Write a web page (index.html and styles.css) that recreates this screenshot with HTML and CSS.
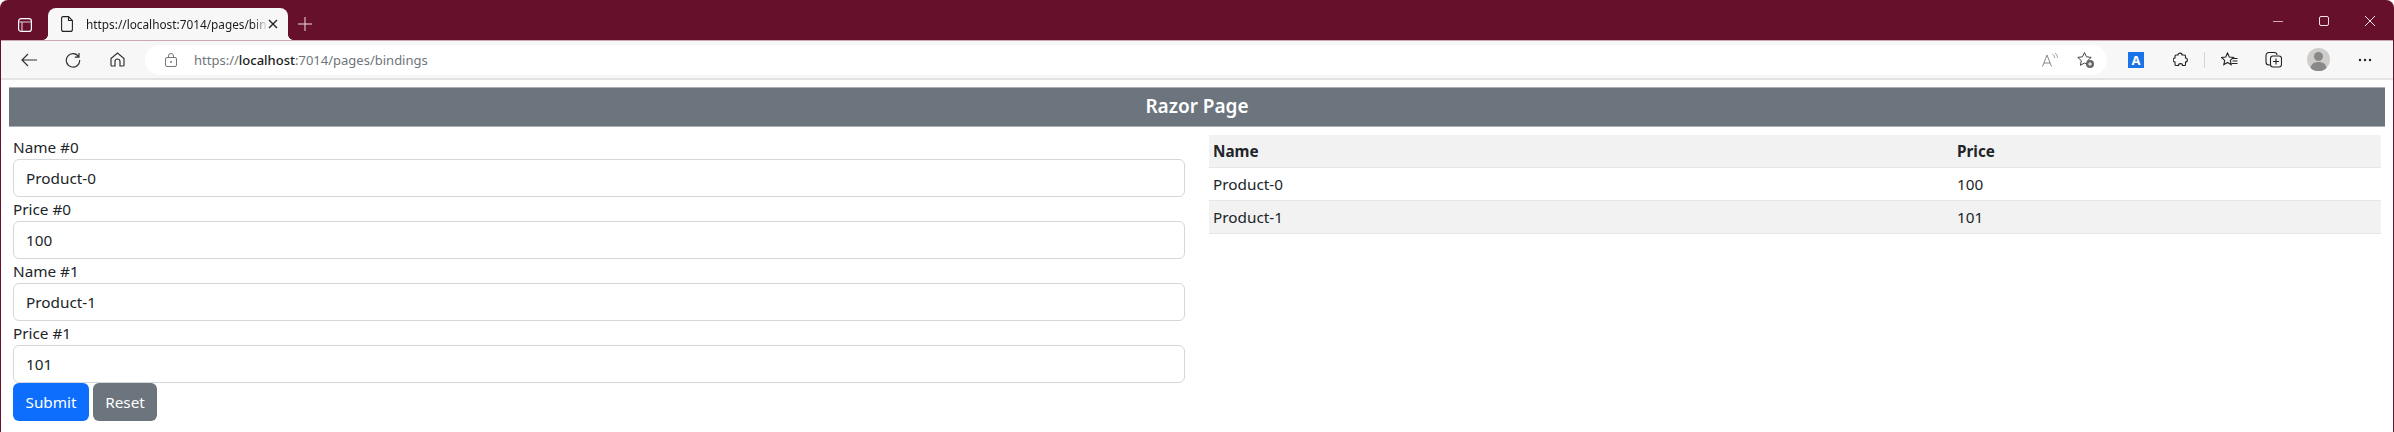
FILE: index.html
```html
<!DOCTYPE html>
<html lang="en">
<head>
<meta charset="utf-8">
<title>Razor Page</title>
<link rel="stylesheet" href="styles.css">
</head>
<body>
<div class="window">
  <header class="titlebar">
    <svg class="ic tabs-ic" width="14" height="14" viewBox="0 0 14 14"><rect x=".6" y=".6" width="12.800" height="12.800" rx="2.500" fill="none" stroke="#fff" stroke-width="1.200"/><path d="M.6 4h12.800M4 4v9.400" stroke="#e6cdd6" fill="none" stroke-width="1.100"/></svg>
    <div class="tab">
      <svg class="ic" width="12" height="16" viewBox="0 0 12 16"><path d="M2 .6h5.500L11.400 4.500V13.400a2 2 0 0 1-2 2H2.600a2 2 0 0 1-2-2V2a1.400 1.400 0 0 1 1.400-1.400zM7.500.6v3.900h3.900" fill="none" stroke="#222" stroke-width="1.100"/></svg>
      <span class="tab-title">https://localhost:7014/pages/bin</span>
      <svg class="ic tab-x" width="10" height="10" viewBox="0 0 10 10"><path d="M1 1l8 8M9 1l-8 8" stroke="#222" stroke-width="1.400"/></svg>
    </div>
    <svg class="ic new-tab" width="14" height="14" viewBox="0 0 14 14"><path d="M7 0v14M0 7h14" stroke="#f0dbe3" stroke-width="1"/></svg>
    <div class="win-controls">
      <svg class="ic" width="10" height="10" viewBox="0 0 10 10"><path d="M0 5.500h10" stroke="#cfa9b8" stroke-width="1"/></svg>
      <svg class="ic" width="10" height="10" viewBox="0 0 10 10"><rect x=".5" y=".5" width="9" height="9" rx="1.500" fill="none" stroke="#f3e3e9" stroke-width="1"/></svg>
      <svg class="ic" width="10" height="10" viewBox="0 0 10 10"><path d="M0 0l10 10M10 0L0 10" stroke="#f3e3e9" stroke-width="1"/></svg>
    </div>
  </header>
  <nav class="toolbar">
    <svg class="ic back" width="16" height="14" viewBox="0 0 16 14"><path d="M16 7H1M7 1L1 7l6 6" fill="none" stroke="#333" stroke-width="1.200"/></svg>
    <svg class="ic reload" width="16" height="16" viewBox="0 0 16 16"><path d="M13.800 5A6.700 6.700 0 1 0 14.700 8M14 1v4.200H9.800" fill="none" stroke="#333" stroke-width="1.200"/></svg>
    <svg class="ic home" width="15" height="15" viewBox="0 0 15 15"><path d="M1 6.500L7.500 1 14 6.500V13a1 1 0 0 1-1 1h-3V9.500a2.500 2.500 0 0 0-5 0V14H2a1 1 0 0 1-1-1z" fill="none" stroke="#333" stroke-width="1.200"/></svg>
    <div class="omnibox">
      <svg class="ic lock" width="12" height="14" viewBox="0 0 12 14"><rect x=".5" y="4.500" width="11" height="9" rx="1.500" fill="none" stroke="#777" stroke-width="1"/><path d="M3.500 4.500V3a2.500 2.500 0 0 1 5 0v1.500" fill="none" stroke="#777" stroke-width="1"/><circle cx="6" cy="9" r="1" fill="#777"/></svg>
      <span class="url">https://<b>localhost</b>:7014/pages/bindings</span>
      <span class="omni-right">
        <svg class="ic" width="16" height="14" viewBox="0 0 16 14"><path d="M.5 13.500L5 2l4.500 11.500M2 10h6" fill="none" stroke="#888" stroke-width="1"/><path d="M10.500 1c1.500 1 2 2 2 4M13 0c1.600 1.200 2.500 3 2.500 5" fill="none" stroke="#888" stroke-width=".8"/></svg>
        <svg class="ic" width="18" height="18" viewBox="0 0 18 18"><path d="M7.500 1.500l2 4.300 4.700.6-3.500 3.200.9 4.700-4.100-2.300-4.100 2.300.9-4.700L.8 6.400l4.700-.6z" fill="none" stroke="#444" stroke-width="1"/><circle cx="13" cy="13" r="4" fill="#666"/><path d="M13 11v4M11 13h4" stroke="#fff" stroke-width="1"/></svg>
      </span>
    </div>
    <div class="tool-icons">
      <span class="translate">A</span>
      <svg class="ic puzzle" width="15" height="15" viewBox="0 0 15 15"><path d="M5 3C5 .5 9 .5 9 3h2.500a1 1 0 0 1 1 1v2c2.500 0 2.500 4 0 4v2.500a1 1 0 0 1-1 1h-2c0-2.500-4-2.500-4 0H3a1 1 0 0 1-1-1V10C-.5 10-.5 6 2 6V4a1 1 0 0 1 1-1z" fill="none" stroke="#222" stroke-width="1.100"/></svg>
      <span class="tool-sep"></span>
      <svg class="ic fav" width="17" height="16" viewBox="0 0 17 16"><path d="M6.500 1l1.800 4 4.200.5-3.200 2.900.9 4.300-3.700-2.200-3.700 2.200.9-4.300L.5 5.500 4.700 5z" fill="none" stroke="#222" stroke-width="1.100"/><path d="M11 6.500h5.500M11.500 9h5M10.500 11.500h6" stroke="#222" stroke-width="1"/></svg>
      <svg class="ic coll" width="17" height="17" viewBox="0 0 17 17"><path d="M5.500 14H4a3 3 0 0 1-3-3V4.500A3 3 0 0 1 4 1.500h5.500A2.500 2.500 0 0 1 12 4" fill="none" stroke="#222" stroke-width="1.100"/><rect x="5.500" y="5" width="11" height="11" rx="2.500" fill="none" stroke="#222" stroke-width="1.100"/><path d="M11 7.500v6M8 10.500h6" stroke="#222" stroke-width="1.100"/></svg>
      <svg class="avatar" width="23" height="23" viewBox="0 0 23 23"><circle cx="11.500" cy="11.500" r="11.500" fill="#cfcdcb"/><circle cx="11.500" cy="8.500" r="4.500" fill="#8a8987"/><path d="M3.500 20c.8-4.500 4-6 8-6s7.200 1.500 8 6a11.500 11.500 0 0 1-16 0z" fill="#8a8987"/></svg>
      <svg class="ic more" width="14" height="4" viewBox="0 0 14 4"><circle cx="2" cy="2" r="1.200" fill="#222"/><circle cx="7" cy="2" r="1.200" fill="#222"/><circle cx="12" cy="2" r="1.200" fill="#222"/></svg>
    </div>
  </nav>
  <main class="page">
    <h1 class="banner">Razor Page</h1>
    <div class="columns">
      <form class="form">
        <label class="lbl">Name #0</label>
        <input class="field" value="Product-0">
        <label class="lbl">Price #0</label>
        <input class="field" value="100">
        <label class="lbl">Name #1</label>
        <input class="field" value="Product-1">
        <label class="lbl">Price #1</label>
        <input class="field" value="101">
        <div class="actions">
          <button type="button" class="btn primary">Submit</button>
          <button type="button" class="btn secondary">Reset</button>
        </div>
      </form>
      <table class="tbl">
        <thead><tr><th>Name</th><th>Price</th></tr></thead>
        <tbody>
          <tr><td>Product-0</td><td>100</td></tr>
          <tr class="alt"><td>Product-1</td><td>101</td></tr>
        </tbody>
      </table>
    </div>
  </main>
</div>
</body>
</html>
```
FILE: styles.css
```css
* { box-sizing: border-box; }
html, body { margin: 0; height: 100%; background: #fff; overflow: hidden; }
body { font-family: "Noto Sans", "Open Sans", sans-serif; color: #212529; }
.window { width: 2394px; height: 432px; display: flex; flex-direction: column; background: #66102c; border-radius: 8px 8px 0 0; padding: 0 1px; overflow: hidden; }
.ic { display: block; flex: none; }
.titlebar { height: 40px; flex: none; display: flex; align-items: center; padding-left: 17px; }
.tabs-ic { margin-top: 10px; }
.tab { position: relative; width: 240px; height: 32px; margin: 8px 0 0 16px; background: #f7f7f7; border-radius: 8px 8px 0 0; display: flex; align-items: center; padding: 0 10px 0 13px; }
.tab::before, .tab::after { content: ""; position: absolute; bottom: 0; width: 5px; height: 5px; }
.tab::before { left: -5px; background: radial-gradient(circle at 0 0, transparent 4.500px, #f7f7f7 5px); }
.tab::after { right: -5px; background: radial-gradient(circle at 100% 0, transparent 4.500px, #f7f7f7 5px); }
.tab-title { flex: 1; margin-left: 13px; font-size: 11.800px; white-space: nowrap; color: #1c1c1c; -webkit-mask-image: linear-gradient(to right, #000 92%, transparent 100%); mask-image: linear-gradient(to right, #000 92%, transparent 100%); }
.new-tab { margin: 8px 0 0 10px; }
.win-controls { margin-left: auto; display: flex; gap: 36px; padding-right: 18px; margin-top: 1px; }
.toolbar { height: 40px; flex: none; background: #f7f7f7; border-top: 1px solid #c9a9b5; border-bottom: 2px solid #e4e4e4; display: flex; align-items: center; padding-left: 20px; }
.reload { margin-left: 28px; }
.home { margin-left: 29px; }
.omnibox { margin-left: 20px; width: 1962px; height: 30px; background: #fff; border-radius: 15px; display: flex; align-items: center; padding: 0 12px 0 20px; flex: none; }
.url { margin-left: 17px; font-size: 13px; color: #70757a; }
.url b { font-weight: 500; color: #1c1c1c; }
.omni-right { margin-left: auto; display: flex; align-items: center; gap: 19px; }
.tool-icons { display: flex; align-items: center; margin-left: 21px; }
.translate { width: 16px; height: 16px; background: #1a73e8; color: #fff; font-size: 13px; font-weight: 700; display: flex; align-items: center; justify-content: center; }
.puzzle { margin-left: 29px; }
.tool-sep { width: 1px; height: 16px; background: #d5d5d5; margin-left: 16px; }
.fav { margin-left: 16px; }
.coll { margin-left: 27px; }
.avatar { margin-left: 25px; flex: none; }
.more { margin-left: 28px; }
.page { flex: 1; background: #fff; padding: 7px 8px 0; min-height: 0; }
.banner { margin: 0; height: 40px; background: #6c757d; border-top: 1px solid #a9afb4; border-bottom: 1px solid #a9afb4; color: #fff; font-size: 19px; font-weight: 600; text-align: center; line-height: 37px; }
.columns { display: grid; grid-template-columns: 1172px 1172px; gap: 24px; padding: 8px 4px 0; }
.form { display: flex; flex-direction: column; }
.lbl { display: block; height: 24px; font-size: 15.300px; line-height: 24px; }
.field { display: block; width: 100%; height: 38px; border: 1px solid #d3d8dd; border-radius: 6px; padding: 0 12px; font: inherit; font-size: 15.300px; color: #212529; background: #fff; }
.actions { display: flex; gap: 4px; }
.btn { height: 38px; border: 1px solid transparent; border-radius: 6px; padding: 0; font: inherit; font-size: 15.300px; color: #fff; }
.primary { background: #0d6efd; width: 76px; }
.secondary { background: #6c757d; width: 64px; }
.tbl { width: 100%; border-collapse: collapse; align-self: start; font-size: 15.300px; table-layout: fixed; }
.tbl th, .tbl td { text-align: left; padding: 4px; line-height: 24px; border-bottom: 1px solid #e6e6e6; }
.tbl th:first-child { width: 744px; }
.tbl th { font-weight: 700; background: #f2f2f2; }
.tbl .alt td { background: #f2f2f2; }
```
